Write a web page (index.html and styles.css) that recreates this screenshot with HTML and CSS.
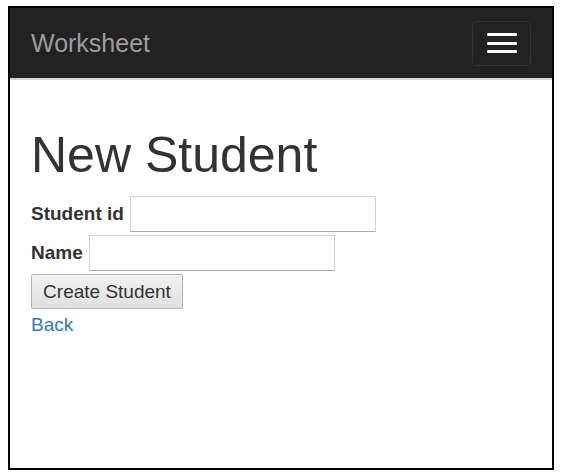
FILE: index.html
```html
<!DOCTYPE html>
<html>
<head>
<meta charset="utf-8">
<title>New Student</title>
<link rel="stylesheet" href="styles.css">
</head>
<body>
<div class="frame">
  <nav class="navbar">
    <a class="brand" href="#">Worksheet</a>
    <button class="toggle" type="button" aria-label="Toggle navigation">
      <span class="bar"></span>
      <span class="bar"></span>
      <span class="bar"></span>
    </button>
  </nav>
  <main class="content">
    <h1 class="title">New Student</h1>
    <form class="form">
      <div class="field">
        <label class="label" for="sid">Student id</label>
        <input class="input" id="sid" type="text">
      </div>
      <div class="field">
        <label class="label" for="name">Name</label>
        <input class="input" id="name" type="text">
      </div>
      <div class="actions">
        <button class="btn" type="button">Create Student</button>
      </div>
    </form>
    <a class="back" href="#">Back</a>
  </main>
</div>
</body>
</html>
```

FILE: styles.css
```css
html, body {
  margin: 0;
  padding: 0;
  background: #fff;
}
body {
  padding: 6px 8px;
  font-family: "Liberation Sans", Arial, sans-serif;
  font-size: 19px;
  line-height: 1.42857;
  color: #333;
}
.frame {
  width: 542px;
  height: 460px;
  border: 2px solid #000;
  overflow: hidden;
  background: #fff;
}
.navbar {
  height: 70px;
  background: #222;
  border-bottom: 2px solid #d4d4d4;
  display: flex;
  align-items: center;
  justify-content: space-between;
  padding: 0 21px 0 21px;
}
.brand {
  color: #9d9d9d;
  text-decoration: none;
  font-size: 25px;
  line-height: 1;
}
.toggle {
  width: 59px;
  height: 45px;
  background: transparent;
  border: 1px solid #333;
  border-radius: 5px;
  padding: 0;
  display: flex;
  flex-direction: column;
  align-items: center;
  justify-content: center;
  gap: 5.5px;
}
.bar {
  display: block;
  width: 30px;
  height: 3px;
  background: #fff;
  border-radius: 1px;
}
.content {
  padding: 0 21px;
}
.title {
  margin: 48px 0 14px;
  font-size: 50px;
  font-weight: 500;
  line-height: 54px;
  color: #333;
}
.form {
  display: flex;
  flex-direction: column;
  gap: 3px;
  margin: 0;
}
.field {
  display: flex;
  align-items: center;
  gap: 6px;
}
.label {
  font-weight: bold;
}
.input {
  box-sizing: border-box;
  width: 246px;
  height: 36px;
  margin: 0;
  border: 1px solid #d2d2d2;
  border-bottom-color: #a9a9a9;
  background: #fff;
  font: inherit;
  padding: 2px 4px;
}
.actions {
  display: flex;
}
.btn {
  box-sizing: border-box;
  width: 152px;
  height: 35px;
  margin: 0;
  padding: 0;
  font: inherit;
  color: #333;
  background: linear-gradient(#f2f2f2, #e0e0e0);
  border: 1px solid #b3b3b3;
  border-radius: 2px;
}
.back {
  display: block;
  margin-top: 2px;
  color: #337ab7;
  text-decoration: none;
  line-height: 27px;
  width: max-content;
}
```
